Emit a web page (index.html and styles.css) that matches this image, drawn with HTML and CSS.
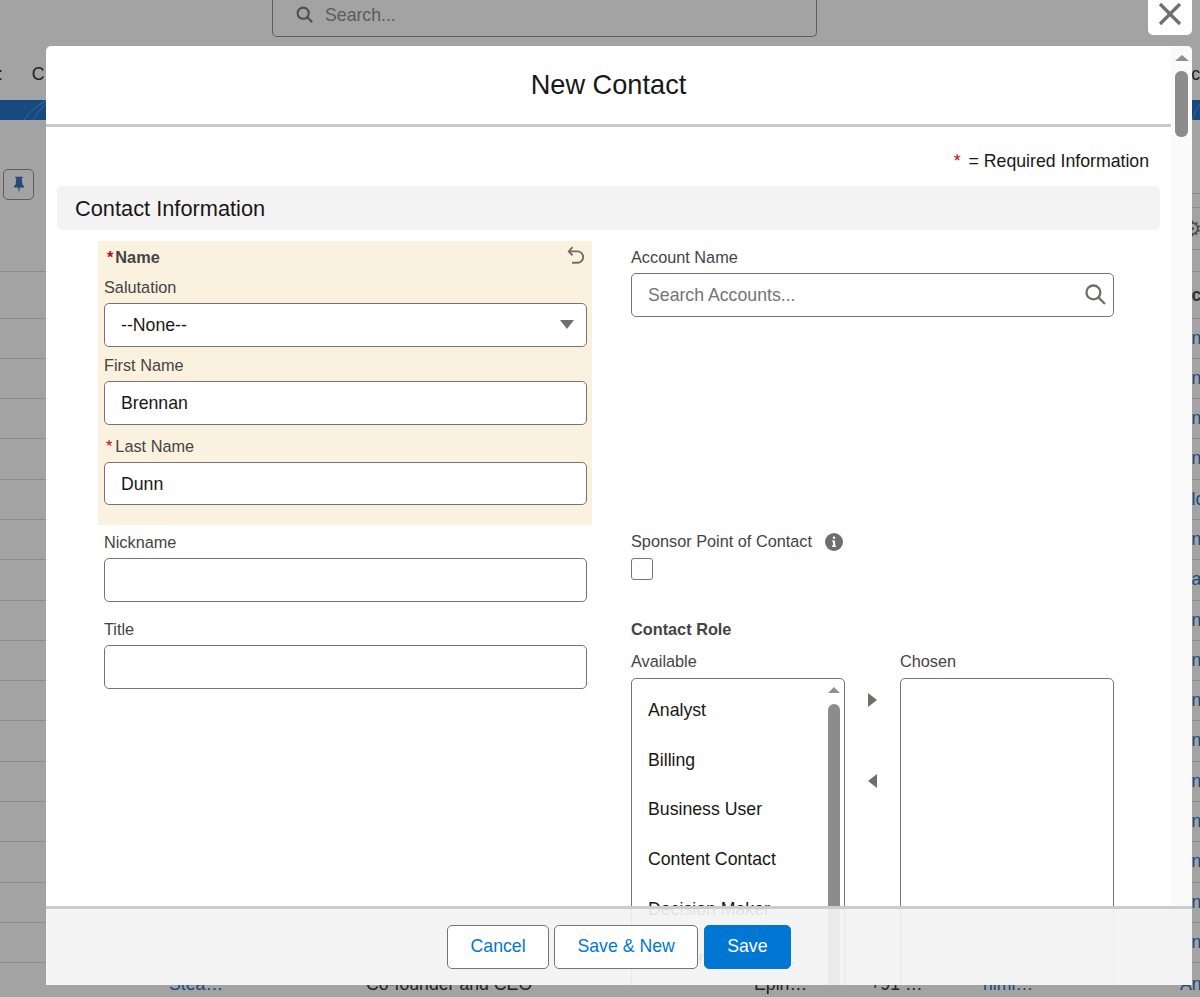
FILE: index.html
```html
<!DOCTYPE html>
<html lang="en">
<head>
<meta charset="utf-8">
<title>New Contact</title>
<link rel="stylesheet" href="styles.css">
</head>
<body>
<div class="page">
  <div class="top">
    <div class="globalsearch">
      <svg class="gs-icon" viewBox="0 0 20 20"><circle cx="8" cy="8" r="6.2"/><path d="M12.6 12.6 18 18"/></svg>
      <span>Search...</span>
    </div>
  </div>
  <div class="tabs"><span class="tab-left">:</span><span class="tab-c">C</span><span class="tab-right">oc</span></div>
  <div class="band">
    <svg class="band-art" viewBox="0 0 1200 20"><path d="M24 20C30 12 36 6 46 1M33 20C38 12 42 6 50 1M1192 20c3-7 5-12 8-16"/></svg>
  </div>
  <div class="toolbar">
    <div class="pin">
      <svg viewBox="0 0 12 20"><path d="M1.5 0h9v2H9.3l.7 7 2 2.5v1.5H7L6 20l-1-7H0v-1.5L2 9l.7-7H1.5z"/></svg>
    </div>
    <div class="toolbar-right">
      <div class="tr-a"></div>
      <div class="tr-b"></div>
      <div class="tr-c"><span class="gear">⚙</span></div>
    </div>
  </div>
  <div class="row head"><b>c</b></div>
  <div class="row"><a>n</a></div>
  <div class="row"><a>n</a></div>
  <div class="row"><a>n</a></div>
  <div class="row"><a>n</a></div>
  <div class="row"><a>lo</a></div>
  <div class="row"><a>n</a></div>
  <div class="row"><a>a</a></div>
  <div class="row"><a>n</a></div>
  <div class="row"><a>n</a></div>
  <div class="row"><a>n</a></div>
  <div class="row"><a>n</a></div>
  <div class="row"><a>n</a></div>
  <div class="row"><a>n</a></div>
  <div class="row"><a>n</a></div>
  <div class="row"><a>n</a></div>
  <div class="row"><a>n</a></div>
  <div class="row last">
    <a class="c1">Stea…</a><span class="c2">Co-founder and CEO</span><span class="c3">Epin…</span><span class="c4">+91 …</span><a class="c5">nimi…</a><a class="c6">An</a>
  </div>
</div>

<div class="close">
  <svg viewBox="0 0 24 24"><path d="M2 2 22 22M22 2 2 22"/></svg>
</div>

<section class="modal">
  <div class="main">
    <header class="mhead"><h2>New Contact</h2></header>
    <div class="mbody">
      <p class="req"><span class="star">*</span> = Required Information</p>
      <h3 class="section">Contact Information</h3>
      <div class="grid">
        <div class="namebox">
          <div class="namehead">
            <span class="lbl strong"><span class="star s2">*</span>Name</span>
            <svg class="undo" viewBox="0 0 18 19"><path d="M5.5 1.2 1.8 5.4l3.7 4M2.4 5.4h8.1a5.6 5.6 0 0 1 0 11.4H5"/></svg>
          </div>
          <label class="lbl l-sal">Salutation</label>
          <div class="box select"><span>--None--</span><i class="tri-down"></i></div>
          <label class="lbl l-first">First Name</label>
          <input class="box" value="Brennan">
          <label class="lbl l-last"><span class="star s3">*</span>Last Name</label>
          <input class="box" value="Dunn">
        </div>
        <div class="cell cell-top">
          <label class="lbl">Account Name</label>
          <div class="box search">
            <span>Search Accounts...</span>
            <svg viewBox="0 0 20 20"><circle cx="8" cy="8" r="6.6"/><path d="M12.8 12.8 19 19"/></svg>
          </div>
        </div>
        <div class="cell shifted">
          <label class="lbl">Nickname</label>
          <input class="box">
        </div>
        <div class="cell">
          <label class="lbl sponsor">Sponsor Point of Contact
            <svg class="info" viewBox="0 0 18 18"><circle cx="9" cy="9" r="9"/><rect x="7.9" y="3.6" width="2.2" height="2.2" rx=".6"/><path d="M7 7.4h3.1v5.2h1v1.3H7v-1.3h1V8.7H7z"/></svg>
          </label>
          <div class="check"></div>
        </div>
        <div class="cell shifted">
          <label class="lbl">Title</label>
          <input class="box">
        </div>
        <div class="cell shifted">
          <div class="lbl strong">Contact Role</div>
          <div class="duel">
            <div class="duel-col">
              <div class="lbl l-avail">Available</div>
              <div class="list">
                <ul>
                  <li>Analyst</li>
                  <li>Billing</li>
                  <li>Business User</li>
                  <li>Content Contact</li>
                  <li>Decision Maker</li>
                  <li class="trunc">Economic Decision Maker</li>
                </ul>
                <div class="listbar"><i class="tri-up small"></i><div class="thumb"></div></div>
              </div>
            </div>
            <div class="arrows"><i class="tri-right"></i><i class="tri-left"></i></div>
            <div class="duel-col">
              <div class="lbl l-avail">Chosen</div>
              <div class="list"></div>
            </div>
          </div>
        </div>
      </div>
    </div>
  </div>
  <div class="track">
    <i class="tri-up"></i>
    <div class="track-thumb"></div>
  </div>
  <footer class="mfoot">
    <button class="btn">Cancel</button>
    <button class="btn">Save &amp; New</button>
    <button class="btn primary">Save</button>
  </footer>
</section>
</body>
</html>
```
FILE: styles.css
```css
* { box-sizing: border-box; }
html, body { margin: 0; padding: 0; height: 100%; overflow: hidden; }
body { width: 1200px; height: 997px; background: #a3a3a3; font-family: "Liberation Sans", Arial, sans-serif; color: #181818; position: relative; }

/* backdrop page */
.page { height: 997px; overflow: hidden; }
.top { height: 37px; padding-left: 272px; }
.globalsearch { width: 545px; height: 37px; margin-top: 0; border: 1.4px solid #5e5e5e; border-top: 0; border-radius: 0 0 5px 5px; display: flex; align-items: center; padding-left: 23px; padding-bottom: 6px; gap: 11px; font-size: 17.7px; color: #5c5c5c; }
.gs-icon { width: 18px; height: 18px; fill: none; stroke: #4f4f4f; stroke-width: 2.3; }
.tabs { height: 63px; display: flex; align-items: center; font-size: 17.7px; color: #222; padding-top: 12px; }
.tab-left { width: 34px; margin-left: -2px; }
.tab-c { width: 1154px; }
.tab-right { white-space: nowrap; }
.band { height: 20px; background: #164a80; }
.band-art { display: block; width: 1200px; height: 20px; fill: none; stroke: rgba(255,255,255,.16); stroke-width: 1; }
.toolbar { height: 151.5px; border-bottom: 1.5px solid #8c8c8c; display: flex; justify-content: space-between; padding: 49px 0 0 3px; }
.pin { width: 31px; height: 31px; border: 1.4px solid #5e5e5e; border-radius: 5px; display: flex; align-items: center; justify-content: center; }
.pin svg { width: 10px; height: 18px; fill: #254a7a; }
.toolbar-right { width: 8px; margin-top: -49px; }
.tr-a { height: 74px; border-bottom: 1.5px solid #8c8c8c; }
.tr-b { height: 14px; border-bottom: 1.5px solid #8c8c8c; }
.tr-c { height: 42px; border-bottom: 1.5px solid #8c8c8c; overflow: hidden; }
.gear { display: block; font-family: "DejaVu Sans", sans-serif; font-size: 21px; color: #4c4c4c; line-height: 42px; margin-left: -9px; }
.row { height: 40.3px; border-bottom: 1.5px solid #8c8c8c; padding-left: 1191.5px; font-size: 17.7px; line-height: 39px; white-space: nowrap; }
.row a { color: #174a80; }
.row.head { height: 47px; line-height: 46px; }
.row.head b { color: #333; }
.row.last { display: grid; grid-template-columns: 197px 388px 116px 113px 197px 1fr; padding-left: 169px; border-bottom: 0; line-height: 43px; }
.row.last span { color: #222; }

/* close */
.close { position: absolute; left: 1148px; top: 0; width: 44px; height: 35px; background: #fff; border-radius: 0 0 5px 5px; display: flex; justify-content: center; padding-top: 2px; }
.close svg { width: 24px; height: 24px; fill: none; stroke: #6f6f6f; stroke-width: 3.2; }

/* modal */
.modal { position: absolute; left: 46px; top: 46px; width: 1146px; height: 939px; background: #fff; border-radius: 5px 5px 0 0; display: flex; overflow: hidden; }
.main { width: 1125px; height: 939px; display: flex; flex-direction: column; overflow: hidden; }
.mhead { height: 81px; flex: none; border-bottom: 3px solid #c9c9c9; display: flex; align-items: center; justify-content: center; }
.mhead h2 { margin: 0; font-size: 27.2px; font-weight: 400; color: #181818; }
.mbody { flex: 1; overflow: hidden; padding: 0 11px; }
.req { margin: 0; height: 59px; padding: 23px 11px 0 0; text-align: right; font-size: 17.7px; line-height: 22px; }
.star { color: #c4061c; }
.req .star { margin-right: 3px; }
.section { margin: 0; height: 44px; background: #f3f3f3; border-radius: 5px; padding-left: 18px; font-size: 21.8px; font-weight: 400; line-height: 45px; }
.grid { display: grid; grid-template-columns: 494px 494px; column-gap: 33px; margin: 11px 0 0 41px; grid-template-rows: 284px 87px auto; }
.namebox { background: #fbf1df; padding: 6px 6px 0; }
.namehead { display: flex; justify-content: space-between; height: 21px; }
.undo { width: 18px; height: 19px; fill: none; stroke: #706e6b; stroke-width: 1.9; margin-top: -1px; margin-right: 1px; }
.lbl { display: block; font-size: 16.3px; line-height: 21px; height: 21px; color: #444; }
.strong { font-weight: 700; }
.s2 { margin: 0 2px 0 3px; }
.s3 { margin: 0 3px 0 2px; }
.l-sal { margin: 9px 0 5px; }
.l-first { margin: 8.5px 0 5px; }
.l-last { margin: 11px 0 5px; }
.box { display: block; width: 483px; height: 43.6px; border: 1.4px solid #747474; border-radius: 5px; background: #fff; padding: 2px 16px 0; font: 17.7px "Liberation Sans", Arial, sans-serif; color: #181818; outline: 0; }
.select { display: flex; align-items: center; justify-content: space-between; padding-right: 12px; }
.search { display: flex; align-items: center; justify-content: space-between; color: #747474; padding-right: 7px; }
.search svg { width: 21px; height: 21px; fill: none; stroke: #706e6b; stroke-width: 2.2; margin-top: -2px; }
.tri-down { width: 0; height: 0; border: 7.5px solid transparent; border-top: 9px solid #706e6b; border-bottom: 0; margin-top: -2px; }
.cell { padding: 6px 6px 0; }
.cell.shifted { padding-top: 7px; }
.cell .lbl + .box { margin-top: 5px; }
.sponsor { display: flex; align-items: center; gap: 13px; height: 21px; }
.info { width: 18px; height: 18px; fill: #706e6b; }
.info rect, .info path { fill: #fff; }
.check { width: 22px; height: 22px; margin-top: 6px; border: 1.4px solid #747474; border-radius: 3px; background: #fff; }
.duel { display: flex; margin-top: 11px; }
.l-avail { margin-bottom: 6px; }
.duel-col { width: 214px; flex: none; }
.arrows { width: 55px; flex: none; padding-top: 42px; display: flex; flex-direction: column; align-items: center; gap: 67px; }
.tri-right { width: 0; height: 0; border: 7.5px solid transparent; border-left: 9.5px solid #706e6b; border-right: 0; }
.tri-left { width: 0; height: 0; border: 7.5px solid transparent; border-right: 9.5px solid #706e6b; border-left: 0; }
.list { height: 420px; border: 1.4px solid #747474; border-radius: 5px 5px 0 0; background: #fff; display: flex; justify-content: space-between; }
.list ul { list-style: none; margin: 0; padding: 7px 0 0 16px; font-size: 17.7px; flex: 1; min-width: 0; }
.list li { height: 49.7px; line-height: 49.7px; white-space: nowrap; }
.list li.trunc { width: 157px; overflow: hidden; text-overflow: ellipsis; }
.listbar { width: 12px; margin-right: 4px; flex: none; padding-top: 8px; display: flex; flex-direction: column; align-items: center; }
.thumb { width: 12px; height: 400px; margin-top: 11px; border-radius: 6px; background: #8c8c8c; }
.tri-up { display: block; width: 0; height: 0; border: 7px solid transparent; border-bottom: 6px solid #8f8f8f; border-top: 0; }
.tri-up.small { border-width: 0 6.5px 6px; border-color: transparent transparent #8f8f8f; }

.track { width: 21px; background: #fafafa; display: flex; flex-direction: column; align-items: center; padding-top: 9px; }
.track-thumb { width: 12.5px; height: 66px; margin-top: 10px; border-radius: 6px; background: #8c8c8c; }

.mfoot { position: absolute; left: 0; right: 0; bottom: 0; height: 79px; background: rgba(243,243,243,.92); border-top: 3px solid rgba(201,201,201,.95); display: flex; justify-content: center; gap: 5.5px; padding-top: 16px; }
.btn { height: 43.5px; width: 102px; border: 1.4px solid #747474; border-radius: 5px; background: #fff; color: #0176d3; font: 17.7px "Liberation Sans", Arial, sans-serif; padding: 0; }
.btn:nth-child(2) { width: 144.5px; margin-left: -.7px; }
.btn.primary { width: 87px; background: #0176d3; border-color: #0176d3; color: #fff; }
```
